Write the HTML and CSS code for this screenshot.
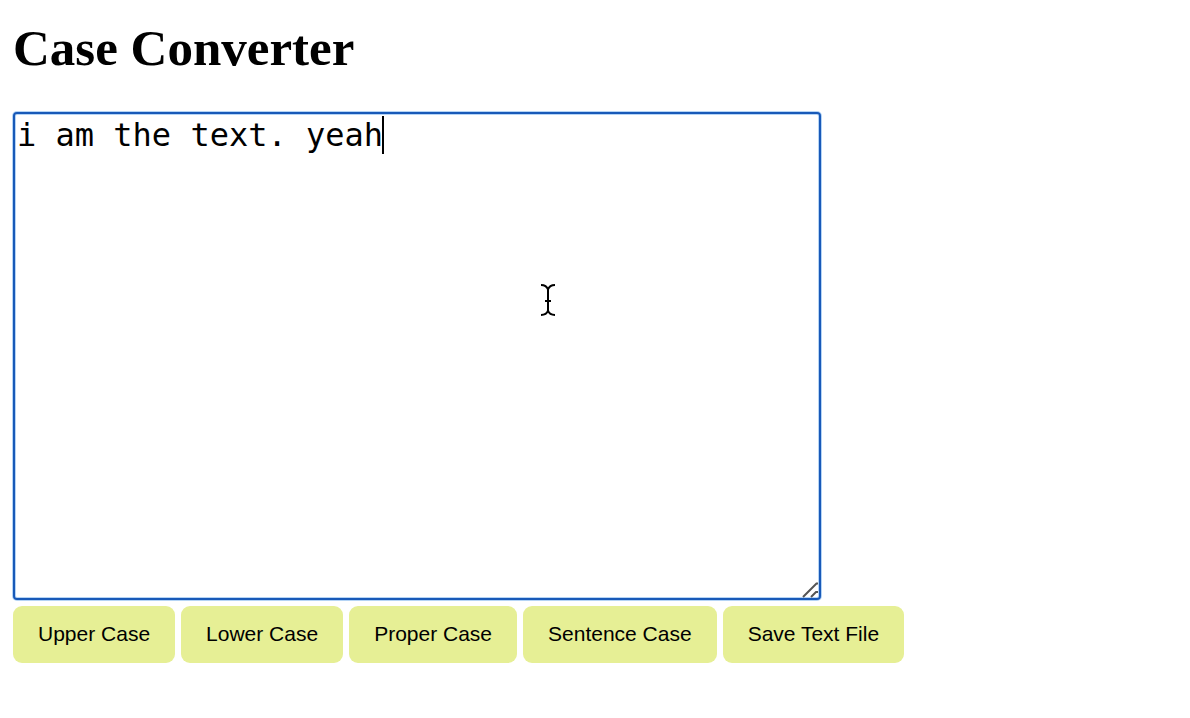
FILE: index.html
```html
<!DOCTYPE html>
<html lang="en">
<head>
<meta charset="utf-8">
<title>Case Converter</title>
<link rel="stylesheet" href="styles.css">
</head>
<body>
<h1 class="title" id="title">Case Converter</h1>
<div class="editor">
<textarea class="editor-text" aria-labelledby="title" spellcheck="false">i am the text. yeah</textarea>
<span class="caret"></span>
<svg class="grip" viewBox="0 0 16 16" aria-hidden="true"><path d="M1 15L14.500 1.500H16M9 15l5-5H16"/></svg>
<svg class="pointer" viewBox="0 0 16 34" aria-hidden="true"><path d="M1 2c3.500 0 6 1.500 7 4.500C9 3.500 11.500 2 15 2M8 6v22M1 32c3.500 0 6-1.500 7-4.500 1 3 3.500 4.500 7 4.500M5 18h6"/></svg>
</div>
<div class="actions">
<button class="action" type="button">Upper Case</button>
<button class="action" type="button">Lower Case</button>
<button class="action" type="button">Proper Case</button>
<button class="action" type="button">Sentence Case</button>
<button class="action" type="button">Save Text File</button>
</div>
</body>
</html>
```
FILE: styles.css
```css
body {
  margin: 0;
  padding: 17px 13px;
  background: #fff;
  color: #000;
  font-family: "Liberation Serif", "Times New Roman", serif;
}
.title {
  margin: 0 0 33px;
  font-size: 51px;
  line-height: 62px;
}
.editor {
  position: relative;
  width: 808px;
  max-width: 100%;
}
.editor-text {
  display: block;
  box-sizing: border-box;
  width: 100%;
  height: 488px;
  margin: 0;
  padding: 2px;
  border: 2px solid #1859b8;
  border-radius: 4px;
  outline: none;
  box-shadow: 0 0 0 1px #b5d4f5, inset 0 0 0 1px #b5d4f5;
  resize: none;
  background: #fff;
  color: #000;
  font: 32px/38px "DejaVu Sans Mono", monospace;
}
.caret {
  position: absolute;
  top: 4px;
  left: 369px;
  width: 2px;
  height: 38px;
  background: #000;
}
.grip {
  position: absolute;
  right: 3px;
  bottom: 2px;
  width: 16px;
  height: 16px;
  fill: none;
  stroke: #555;
  stroke-width: 2;
}
.pointer {
  position: absolute;
  top: 171px;
  left: 527px;
  width: 16px;
  height: 34px;
  fill: none;
  stroke: #000;
  stroke-width: 2;
}
.actions {
  display: flex;
  flex-wrap: wrap;
  gap: 6px;
  margin-top: 6px;
}
.action {
  margin: 0;
  padding: 15px 25px 17px;
  border: 0;
  border-radius: 9px;
  background: #e6ef95;
  color: #000;
  font: 21px/25px "Liberation Sans", Arial, sans-serif;
}
```
